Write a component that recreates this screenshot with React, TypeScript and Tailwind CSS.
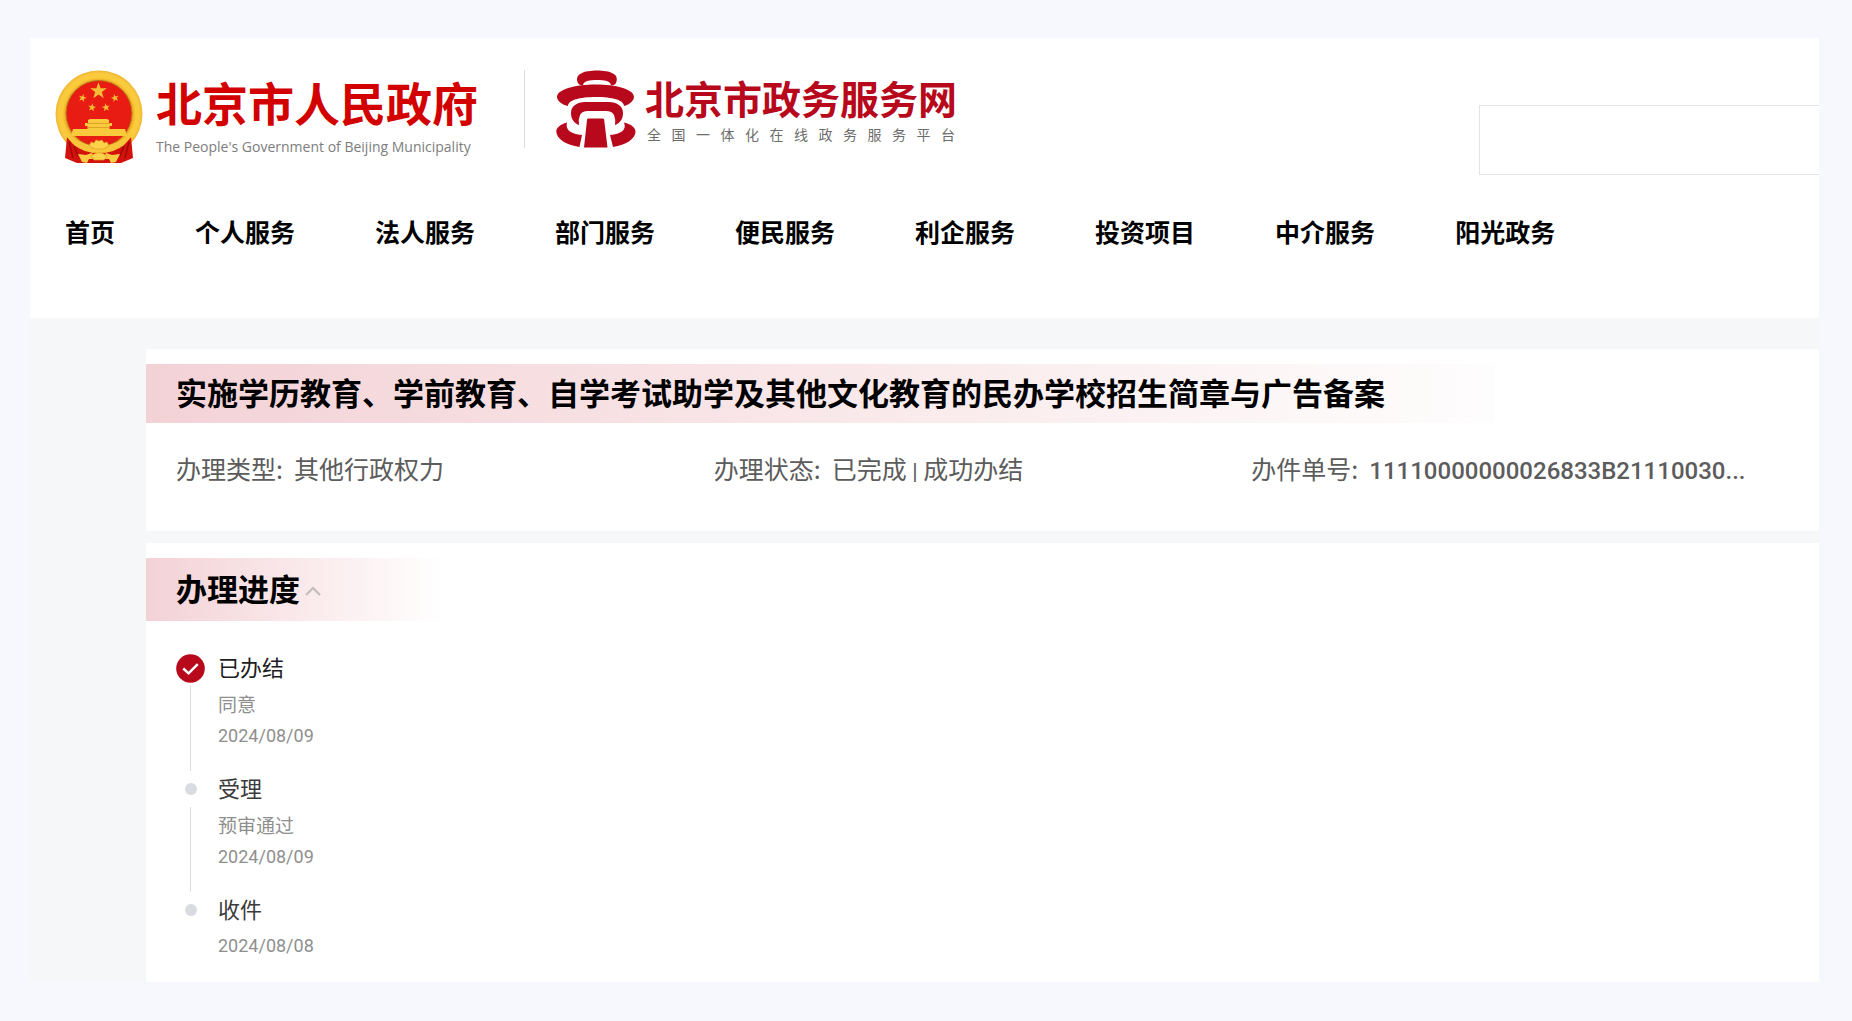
import React from "react";

const SANS = "font-['Noto_Sans_CJK_SC',sans-serif]";
const STAR = "M0 -10 L2.4 -3.2 L9.5 -3.1 L3.8 1.2 L5.9 8.1 L0 4 L-5.9 8.1 L-3.8 1.2 L-9.5 -3.1 L-2.4 -3.2 Z";

function Emblem() {
  return (
    <svg viewBox="0 0 88 94" className="h-[94px] w-[88px] shrink-0" role="img" aria-label="国徽">
      <defs>
        <radialGradient id="gold" cx="50%" cy="50%" r="50%">
          <stop offset="76%" stopColor="#e9a522" />
          <stop offset="84%" stopColor="#fbcb38" />
          <stop offset="93%" stopColor="#f9ca40" />
          <stop offset="100%" stopColor="#efb52e" />
        </radialGradient>
      </defs>
      <circle cx="44" cy="44" r="43.5" fill="url(#gold)" />
      <path d="M12 67 L20 76 L44 84 L68 76 L76 67 L78 88 L66 93 L22 93 L10 88 Z" fill="#d3120d" />
      <path d="M14 72 L18 88 M74 72 L70 88 M19 76 L23 86 M69 76 L65 86" stroke="#9b0a07" strokeWidth="1.4" />
      <circle cx="44" cy="43.5" r="33" fill="#e81c13" stroke="#b9791c" strokeWidth="1" />
      <g fill="#f3bd35">
        <path d={STAR} transform="translate(43.5 21) scale(.88)" />
        <path d={STAR} transform="translate(27.5 28) scale(.42) rotate(15)" />
        <path d={STAR} transform="translate(60 28) scale(.42) rotate(-15)" />
        <path d={STAR} transform="translate(37 37.5) scale(.42) rotate(10)" />
        <path d={STAR} transform="translate(51 37.5) scale(.42) rotate(-10)" />
        <path d="M33 50 L35 49 H52 L54 50 V53 H57 V56 H54.500 V59 H70 L72 66 H16 L18 59 H32.500 V56 H30 V53 H33 Z" fill="#f9ca3c" />
      </g>
      <path d="M32 53.500 H55 M32.500 57.500 H55" stroke="#d98f20" strokeWidth=".7" />
      <path d="M14 62 Q20 72 34 75 L37 79 H51 L54 75 Q68 72 74 62 L76 67 Q66 81 50 83 L44 81 L38 83 Q22 81 12 67 Z" fill="#f8c63a" />
      <path d="M34 76 L36 72 L39 73 L41 70 L44 71 L47 70 L49 73 L52 72 L54 76 L48 79 H40 Z" fill="#fbd24a" stroke="#dc9a20" strokeWidth=".6" />
      <path d="M23 84 L31 85 L37 83 L40 89 L34 89 L32 93 L27 92 Z M65 84 L57 85 L51 83 L48 89 L54 89 L56 93 L61 92 Z" fill="#f8cb42" />
      <path d="M36 86 Q44 79 52 86 L49 90 H39 Z" fill="#fbd24a" stroke="#dc9a20" strokeWidth=".7" />
    </svg>
  );
}

function TempleLogo() {
  return (
    <svg viewBox="0 0 80 78" className="h-[78px] w-20 shrink-0" fill="#b8081c" role="img" aria-label="北京市政务服务网">
      <path d="M22 13 C18 4 28 .5 41 .5 C54 .5 64 4 60 13 Q59 15 55 15.500 C55 11 48 10 41 10 C34 10 27 11 27 15.500 Q23 15 22 13 Z" />
      <path d="M12 36 C4 34 1 30 1 26.500 C2 19 20 14.500 39.500 14.500 C60 14.500 77 19 78 26.500 C78 30 75 34 68 36 C68 30 56 27 40 27 C24 27 12 30 12 36 Z" />
      <path d="M23 55 C18 53 15 49 15 43 C15 36 21 32 29 32 H53 C61 32 67 36 67 43 C67 49 64 53 59 55 Q60 50 58 45 Q56 41 50 41 H32 Q26 41 24 45 Q22 50 23 55 Z" />
      <path d="M32 48.500 H47 Q48 48.500 48.200 50 L51.500 77.500 H28 L31 50 Q31 48.500 32 48.500 Z" />
      <path d="M11 52.500 C9 60 15 64 26 65 L23.500 77 C10 75 1 69 .3 62 C0 58 4 54.500 11 52.500 Z" />
      <path d="M68 52.500 C71 60 65 64 54 65 L57 77 C70 75 79 69 79.500 62 C79.500 58 76 54.500 68 52.500 Z" />
    </svg>
  );
}

const NAV = ["首页", "个人服务", "法人服务", "部门服务", "便民服务", "利企服务", "投资项目", "中介服务", "阳光政务"];
const PLATFORM = "全国一体化在线政务服务平台";
const STEPS = [
  { title: "已办结", note: "同意", date: "2024/08/09", done: true },
  { title: "受理", note: "预审通过", date: "2024/08/09", done: false },
  { title: "收件", note: "", date: "2024/08/08", done: false },
];

function Header() {
  return (
    <header className="bg-white pb-[69px] pt-8">
      <div className="flex items-start">
        <a href="#gov" className="ml-[25px] flex">
          <Emblem />
          <span className="ml-[13px] flex flex-col pt-1">
            <span className="text-[46px] font-bold leading-[54px] text-[#d30000]">北京市人民政府</span>
            <span className="mt-2 font-['Open_Sans',sans-serif] text-sm leading-[22px] text-[#7d7d7d]">
              The People's Government of Beijing Municipality
            </span>
          </span>
        </a>
        <div className="ml-[46px] h-[78px] w-px bg-[#dcdcdc]" />
        <a href="#service" className="ml-[31px] flex">
          <TempleLogo />
          <span className="ml-[9px] flex flex-col pt-1">
            <span className="text-[39px] font-bold leading-[46px] text-[#b8081c]">北京市政务服务网</span>
            <span className="mt-1 flex justify-between px-0.5 text-sm leading-5 text-[#6d6d6d]">
              {[...PLATFORM].map((c, i) => (
                <span key={i}>{c}</span>
              ))}
            </span>
          </span>
        </a>
        <input
          type="search"
          aria-label="搜索"
          className="ml-auto mt-[35px] h-[70px] w-[340px] border border-r-0 border-[#e4e4e4] bg-white px-5 text-2xl outline-none"
        />
      </div>
      <nav className="mt-[38px] flex gap-20 pl-[35px] text-[25px] font-bold leading-9 text-black">
        {NAV.map((n) => (
          <a key={n} href={"#" + n} className="whitespace-nowrap">
            {n}
          </a>
        ))}
      </nav>
    </header>
  );
}

function Field({ label, children }: { label: string; children: React.ReactNode }) {
  return (
    <div className="flex min-w-0 gap-[11px]">
      <dt className="whitespace-nowrap">{label}:</dt>
      <dd className="whitespace-nowrap">{children}</dd>
    </div>
  );
}

export default function App() {
  return (
    <div className={`min-h-screen bg-[#f6f8fd] pb-10 pl-[30px] pr-[33px] pt-[38px] ${SANS}`}>
      <Header />
      <main className="flex flex-col gap-3 bg-[#f5f7f9] pl-[116px] pt-[31px]">
        <section className="bg-white pb-[41px] pt-[15px]">
          <h1 className="mr-[324px] whitespace-nowrap bg-linear-to-r from-[#f3d2d6] to-[#fefdfd] pb-1 pl-[30px] text-[31px] font-bold leading-[55px] text-black">
            实施学历教育、学前教育、自学考试助学及其他文化教育的民办学校招生简章与广告备案
          </h1>
          <dl className="mt-[27px] grid grid-cols-3 pl-[30px] pr-[30px] text-[25px] leading-9 text-[#5c5c5c]">
            <Field label="办理类型">其他行政权力</Field>
            <Field label="办理状态">
              已完成 <span className="font-['Roboto',sans-serif] text-[22px]">|</span> 成功办结
            </Field>
            <Field label="办件单号">
              <span className="font-['Roboto',sans-serif] text-2xl/9 font-medium">11110000000026833B21110030...</span>
            </Field>
          </dl>
        </section>
        <section className="bg-white pb-5 pt-[15px]">
          <h2 className="w-[300px] bg-linear-to-r from-[#f3d2d6] to-white pb-1 pl-[30px] text-[31px] font-bold leading-[59px] text-black">
            <button type="button" aria-expanded="true" className="flex items-center gap-[5px]">
              办理进度
              <svg viewBox="0 0 16 10" className="mt-1.5 h-2.5 w-4" fill="none" stroke="#c3bcbe" strokeWidth="2.200">
                <path d="M1 9 L8 2 L15 9" />
              </svg>
            </button>
          </h2>
          <ol className="mt-[29px] pl-[30px]">
            {STEPS.map((s, i) => (
              <li key={s.title} className="flex gap-[13px]">
                <div className="flex w-[29px] flex-col items-center">
                  <div className="flex h-9 items-center">
                    {s.done ? (
                      <svg viewBox="0 0 30 30" className="h-[29px] w-[29px]">
                        <circle cx="15" cy="15" r="14.800" fill="#b8081c" />
                        <path d="M7.500 15 L13 20 L22.500 10.500" fill="none" stroke="#fff" strokeWidth="2.600" />
                      </svg>
                    ) : (
                      <span className="h-3 w-3 rounded-full bg-[#dadbe0]" />
                    )}
                  </div>
                  {i < 2 && <div className="w-px grow bg-[#dcdde0]" />}
                </div>
                <div className={i < 2 ? "h-[121px]" : ""}>
                  <h3 className={`mb-1.5 text-[22px] leading-8 ${s.done ? "text-[#1d1d1d]" : "text-[#3a3a3a]"}`}>{s.title}</h3>
                  {s.note && <p className="text-[19px] leading-8 text-[#8f8f8f]">{s.note}</p>}
                  <p className="font-['Roboto',sans-serif] text-lg leading-8 text-[#8f8f8f]">{s.date}</p>
                </div>
              </li>
            ))}
          </ol>
        </section>
      </main>
    </div>
  );
}
